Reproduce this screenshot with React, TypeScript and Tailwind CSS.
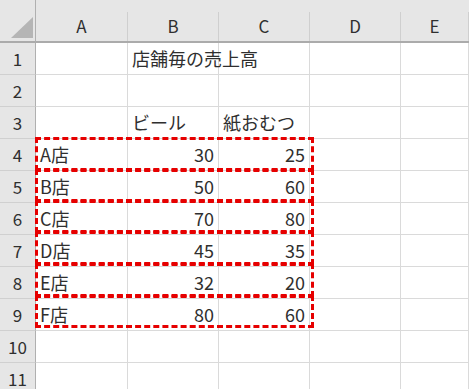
const COLS = ["A", "B", "C", "D", "E"];

type Row = { a?: string; b?: string; c?: string; title?: boolean };

const ROWS: Row[] = [
  { b: "店舗毎の売上高", title: true },
  {},
  { b: "ビール", c: "紙おむつ" },
  { a: "A店", b: "30", c: "25" },
  { a: "B店", b: "50", c: "60" },
  { a: "C店", b: "70", c: "80" },
  { a: "D店", b: "45", c: "35" },
  { a: "E店", b: "32", c: "20" },
  { a: "F店", b: "80", c: "60" },
  {},
  {},
];

// 注釈の赤い点線枠（4〜9行目）
const BOXES = [
  { top: 137, height: 34 },
  { top: 169, height: 33 },
  { top: 200, height: 33 },
  { top: 231, height: 34 },
  { top: 263, height: 34 },
  { top: 295, height: 33 },
];

const font = { fontFamily: '"Noto Sans CJK JP", "Noto Sans", sans-serif' };

export default function App() {
  return (
    <div
      className="relative w-[469px] h-[389px] overflow-hidden bg-white text-[#2f2f2f] text-[18px]"
      style={font}
    >
      <div className="grid grid-cols-[36px_92px_91px_91px_91px_1fr] grid-rows-[43px_repeat(11,32px)]">
        {/* corner */}
        <div className="relative bg-[#e6e6e6] border-r border-r-[#b0b0b0] border-b-2 border-b-[#ababab]">
          <svg className="absolute left-[11px] top-[17px]" width="22" height="22" viewBox="0 0 22 22">
            <polygon points="22,0 22,21 0,21" fill="#b5b5b5" />
          </svg>
        </div>
        {COLS.map((c) => (
          <div
            key={c}
            className="flex flex-col bg-[#e6e6e6] border-b-2 border-b-[#ababab]"
          >
            <div className="h-3 shrink-0" />
            <div className="flex-1 flex items-center justify-center border-r border-r-[#cfcfcf] leading-none pb-[3px] text-[17px]">
              {c}
            </div>
          </div>
        ))}

        {ROWS.map((r, i) => (
          <RowCells key={i} n={i + 1} row={r} />
        ))}
      </div>

      {BOXES.map((b, i) => (
        <div
          key={i}
          className="absolute left-[35px] w-[279px] border-[3px] border-dashed border-[#e60000]"
          style={{ top: b.top, height: b.height }}
        />
      ))}
    </div>
  );
}

function RowCells({ n, row }: { n: number; row: Row }) {
  const cell = "flex items-center border-r border-b border-[#dadada] leading-none px-[4px] pb-[1px] whitespace-nowrap";
  const isNum = (s?: string) => !!s && /^\d+$/.test(s);
  return (
    <>
      <div className="flex items-center justify-center bg-[#e6e6e6] border-r border-r-[#b0b0b0] border-b border-b-[#d0d0d0] leading-none pb-[1px] text-[17px]">
        {n}
      </div>
      <div className={cell}>{row.a}</div>
      <div className={`${cell} ${isNum(row.b) ? "justify-end" : ""} ${row.title ? "overflow-visible relative z-10" : ""}`}>
        {row.b}
      </div>
      <div className={`${cell} ${isNum(row.c) ? "justify-end" : ""}`}>{row.c}</div>
      <div className={cell} />
      <div className={cell} />
    </>
  );
}
